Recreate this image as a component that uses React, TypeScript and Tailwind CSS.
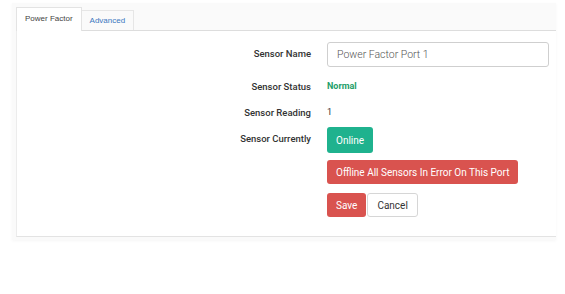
const rows = [
  { label: 'Sensor Status', value: 'Normal', className: 'text-[#1e9e6a] font-bold' },
  { label: 'Sensor Reading', value: '1', className: 'text-[#333]' },
];

const App = () => {
  return (
    <div className="w-[565px] h-[294px] bg-white font-['Roboto',sans-serif]">
      <div className="pt-[3px] pl-[12px] pr-[9px]">
        <div className="bg-[#fafafa] pb-[3px] pl-[4px] shadow-[0_1px_3px_rgba(0,0,0,0.04)]">
          <div className="flex items-end h-[28px] border-b border-[#dddddd] font-['Liberation_Sans',Arial,sans-serif] text-[8px]">
            <div className="h-[24px] px-[8px] flex items-center bg-white border border-b-0 border-[#e3e3e3] text-[#444] -mb-px pb-px">
              Power Factor
            </div>
            <div className="h-[20px] px-[8px] flex items-center border border-b-0 border-l-0 border-[#e6e6e6] text-[#3a78c0] mt-[3px]">
              Advanced
            </div>
          </div>
          <div className="bg-white border-l border-[#ececec] border-b border-b-[#e3e3e3] h-[206px] pt-[11px]">
            <div className="grid grid-cols-[294px_1fr] gap-x-[16px] items-center text-[9.5px] text-[#333]">
              <div className="text-right font-medium">Sensor Name</div>
              <div className="pr-[7px]">
                <div className="h-[25px] border border-[#cfcfcf] rounded-[3px] flex items-center px-[9px] text-[10.5px] text-[#555] font-light">
                  Power Factor Port 1
                </div>
              </div>
              <div className="col-span-2 h-[7px]" />
              {rows.map((r) => (
                <div key={r.label} className="contents">
                  <div className="text-right font-medium h-[26px] flex items-center justify-end">{r.label}</div>
                  <div className={`h-[26px] flex items-center text-[9px] ${r.className}`}>{r.value}</div>
                </div>
              ))}
              <div className="text-right font-medium">Sensor Currently</div>
              <div className="pt-[1px]">
                <button className="h-[26px] px-[9px] rounded-[3px] bg-[#1fb28e] text-white text-[10px]">Online</button>
              </div>
              <div />
              <div className="pt-[7px]">
                <button className="h-[24px] px-[9px] rounded-[3px] bg-[#d9534f] text-white text-[10px]">
                  Offline All Sensors In Error On This Port
                </button>
              </div>
              <div />
              <div className="pt-[9px] flex">
                <button className="h-[24px] px-[9px] rounded-[3px] bg-[#d9534f] text-white text-[10px]">Save</button>
                <button className="h-[24px] px-[9px] rounded-[3px] bg-white border border-[#d6d6d6] text-[#333] text-[10px] ml-px">Cancel</button>
              </div>
            </div>
          </div>
        </div>
      </div>
    </div>
  );
};

export default App;
